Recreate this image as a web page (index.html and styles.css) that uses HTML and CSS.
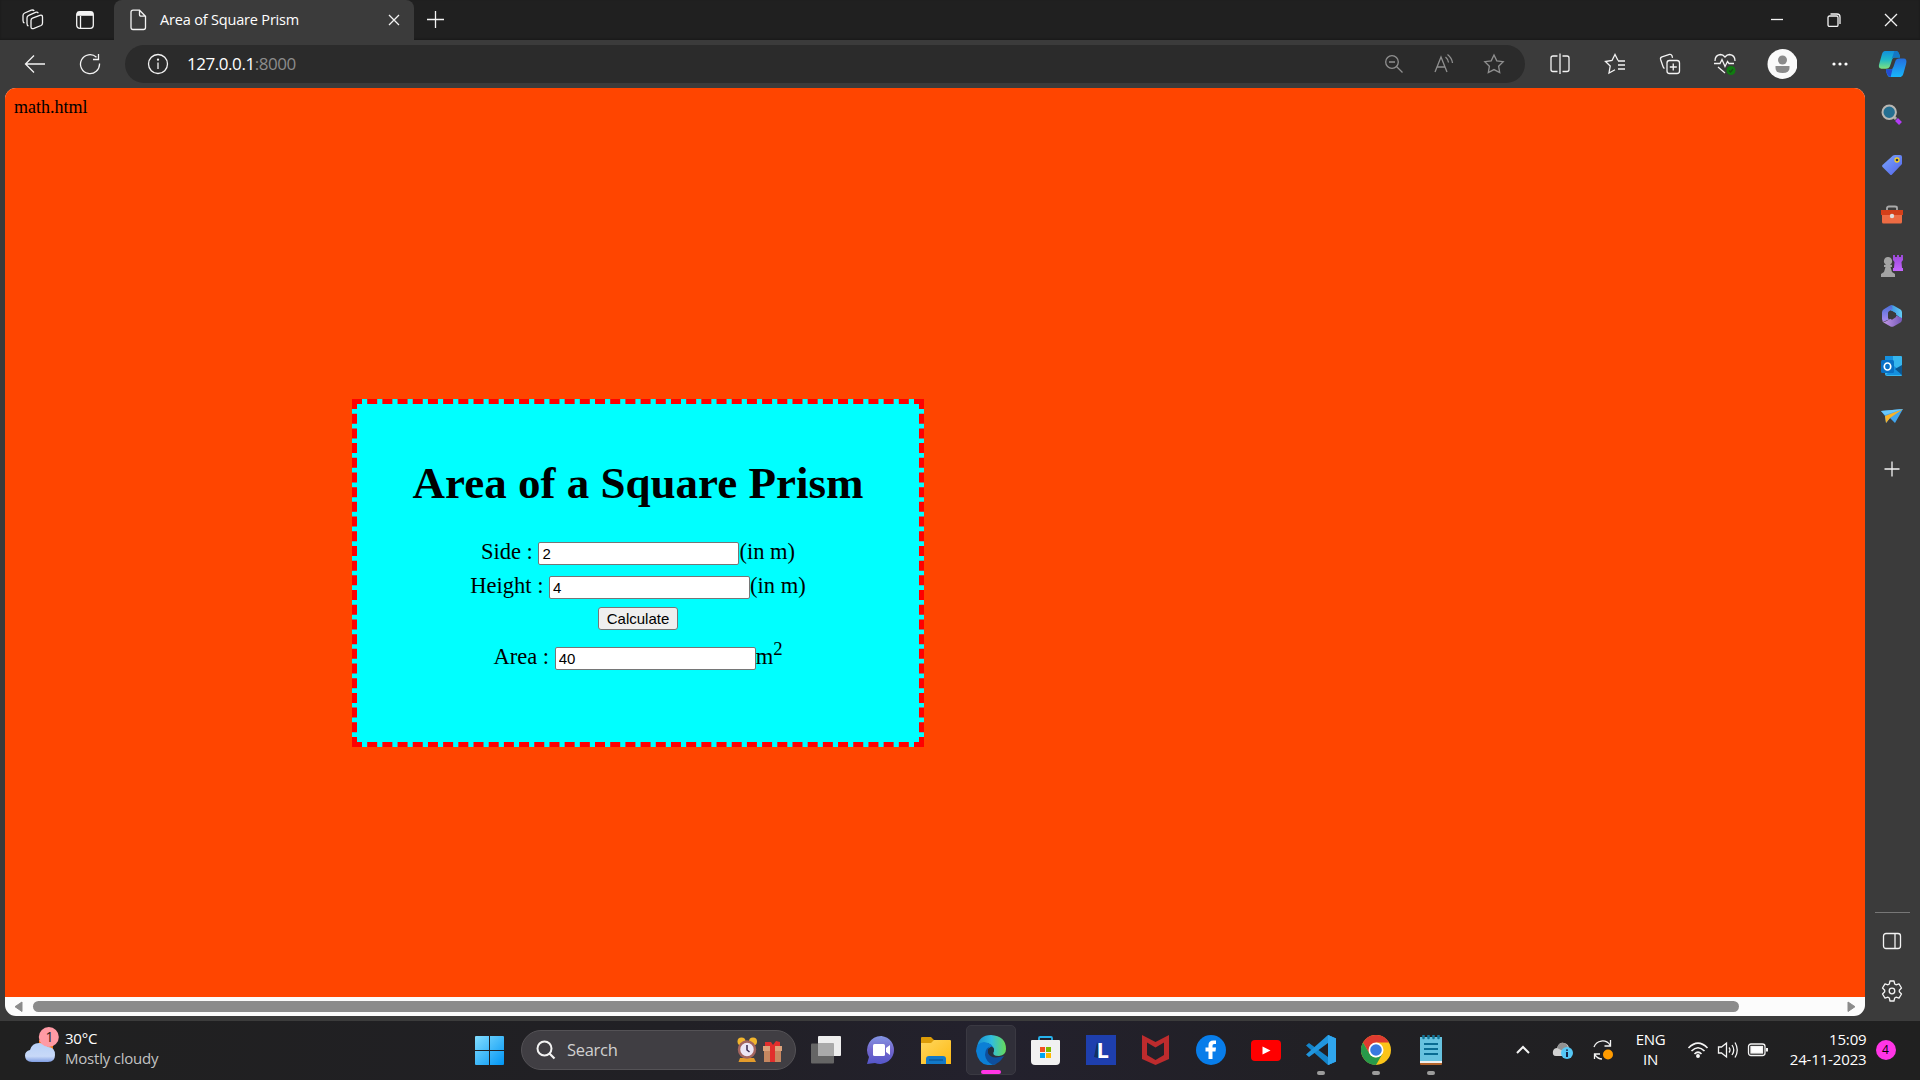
FILE: index.html
```html
<!DOCTYPE html>
<html lang="en">
<head>
<meta charset="utf-8">
<title>Area of Square Prism</title>
<link rel="stylesheet" href="styles.css">
</head>
<body>
<header class="tabbar">
  <div class="tabtools">
    <svg class="line" width="22" height="22" viewBox="0 0 22 22"><path d="M10.500 9.200L17.800 6.300Q20.500 5.500 20.500 8V14Q20.500 15.800 19 16.500L12 19.400Q9 20.500 9 17.800V11.500Q9 9.800 10.500 9.200Z M6.500 17Q5 16.500 5 14.500V8.800Q5 7 6.800 6.300L13.500 3.400Q15.500 2.700 16.300 4.300 M2.500 14Q1 13.500 1 11.500V6.500Q1 4.700 2.700 4L9.300 1.200Q11.300.5 12.200 1.900"/></svg>
    <svg class="line" width="20" height="20" viewBox="0 0 20 20"><rect x="1.700" y="1.700" width="16.600" height="16.600" rx="3"/><path d="M5.500 6V18"/><path d="M2 3.800H18" stroke-width="4"/></svg>
  </div>
  <div class="tab">
    <svg class="line" width="18" height="22" viewBox="0 0 18 22"><path d="M4 1.200H10.500L16.500 7.200V18.500Q16.500 20.500 14.500 20.500H4Q2 20.500 2 18.500V3.200Q2 1.200 4 1.200Z M10.500 1.500V5.500Q10.500 7.200 12 7.200H16.200"/></svg>
    <span class="tabtitle">Area of Square Prism</span>
    <svg class="line close" width="12" height="12" viewBox="0 0 12 12"><path d="M1 1L11 11M11 1L1 11"/></svg>
  </div>
  <svg class="line plus" width="18" height="18" viewBox="0 0 18 18"><path d="M8.500 0V17M0 8.500H17"/></svg>
  <div class="wincontrols">
    <svg class="line" width="14" height="14" viewBox="0 0 14 14"><path d="M1 6.500H13"/></svg>
    <svg class="line" width="14" height="14" viewBox="0 0 14 14"><rect x="1" y="3" width="10" height="10.500" rx="1.500"/><path d="M3.500 1H10Q13 1 13 4V11"/></svg>
    <svg class="line" width="14" height="14" viewBox="0 0 14 14"><path d="M1 1L13 13M13 1L1 13"/></svg>
  </div>
</header>
<nav class="toolbar">
  <div class="navbuttons">
    <svg class="line" width="22" height="20" viewBox="0 0 22 20"><path d="M21 10H1.500M10 1.500L1.500 10L10 18.500"/></svg>
    <svg class="line" width="22" height="22" viewBox="0 0 22 22"><path d="M20.500 10.500A9.500 9.500 0 1 1 17.500 4.200M19.500 1V6.500H14"/></svg>
  </div>
  <div class="address">
    <svg class="line" width="22" height="22" viewBox="0 0 22 22"><circle cx="11" cy="11" r="9.500"/><path d="M11 9.500V16"/><circle cx="11" cy="6.700" r=".5"/></svg>
    <span class="url">127.0.0.1<span class="port">:8000</span></span>
    <div class="addressicons">
      <svg class="line" width="20" height="20" viewBox="0 0 20 20"><circle cx="8" cy="8" r="6.300"/><path d="M5 8H11M12.500 12.500L18.500 18.500"/></svg>
      <svg class="line" width="22" height="22" viewBox="0 0 22 22"><path d="M2 19L8 4L14 19M4 14H12M12.500 4Q15 6 15.500 9.500M14.500 1.500Q19 5 19.500 10"/></svg>
      <svg class="line" width="22" height="22" viewBox="0 0 22 22"><path d="M11 2L13.800 7.800L20.200 8.700L15.600 13.200L16.700 19.600L11 16.600L5.300 19.600L6.400 13.200L1.800 8.700L8.200 7.800Z"/></svg>
    </div>
  </div>
  <div class="tools">
    <svg class="line" width="22" height="22" viewBox="0 0 22 22"><path d="M8.500 3H4Q2 3 2 5V16.500Q2 18.500 4 18.500H8.500M13.500 3H18Q20 3 20 5V16.500Q20 18.500 18 18.500H13.500M11 .5V21"/></svg>
    <svg class="line" width="22" height="22" viewBox="0 0 22 22"><path d="M14 7.500L11 1.500L8 7.500L1.500 8.500L6.200 13L5 20L11 16.800M14 8H21M14 12H21M14 16H21"/></svg>
    <svg class="line" width="22" height="22" viewBox="0 0 22 22"><rect x="8" y="7.500" width="12.500" height="13" rx="2.500"/><path d="M14.250 10.500V17.500M10.800 14H17.800M5.500 15.500Q4.500 15 4 13.500L1.600 6.500Q1 4.500 3 3.800L10.500 1.400Q12.300 1 13 2.700L13.500 4.800"/></svg>
    <svg class="line" width="24" height="24" viewBox="0 0 24 24"><path d="M2 9Q2 3 7.500 2.500Q10 2.500 12 5Q14 2.500 16.500 2.500Q22 3 22 9M1 11.500H7L9 7.500L12 14.500L14.500 9.500L16 11.500H21M5 15L12 21"/><circle cx="18" cy="18.500" r="4.500" fill="#107c10" stroke="none"/><path d="M16 18.500L17.500 20L20 17" stroke="#174b17"/></svg>
    <svg width="30" height="32" viewBox="0 0 30 32"><circle cx="15.500" cy="16" r="15" fill="#fafafa"/><circle cx="15.500" cy="12" r="4.500" fill="#8a8a8a"/><path d="M8.500 18H22.500V20Q22.500 25 15.500 25Q8.500 25 8.500 20Z" fill="#8a8a8a"/></svg>
    <svg width="18" height="6" viewBox="0 0 18 6"><g fill="#fff"><circle cx="3" cy="3" r="1.600"/><circle cx="9" cy="3" r="1.600"/><circle cx="15" cy="3" r="1.600"/></g></svg>
    <svg width="30" height="28" viewBox="0 0 31 30"><defs><linearGradient id="cpa" x2="0" y2="1"><stop stop-color="#118fdd"/><stop offset=".5" stop-color="#20b9c8"/><stop offset="1" stop-color="#7fe27c"/></linearGradient><linearGradient id="cpb" x2="0" y2="1"><stop stop-color="#246dde"/><stop offset="1" stop-color="#18b6fa"/></linearGradient></defs><path d="M7 1H19Q22 1 23 8H17Q15 8 14 12L12 18Q11 20 8 20H3Q-1 20 1 14L3.500 5Q4.500 1 7 1Z" fill="url(#cpa)"/><path d="M17 1H19Q22 1 23 8H17Q15 8 14 10Z" fill="#1477c4"/><path d="M22 9H27Q31 9 29.500 15L27 24Q26 29 22 29H12Q9 29 8 21H13Q15 21 16 18L18 12Q19 9 22 9Z" fill="url(#cpb)"/><path d="M8 21H13L15 20L13 29Q9 29 8 21Z" fill="#234bd2"/></svg>
  </div>
</nav>
<div class="workspace">
  <main class="page">
    <div class="document">
      <div class="templatename">math.html</div>
      <form class="card">
        <h1>Area of a Square Prism</h1>
        <div class="field">Side : <input type="text" value="2">(in m)</div>
        <div class="field">Height : <input type="text" value="4">(in m)</div>
        <div class="action"><button type="button">Calculate</button></div>
        <div class="field">Area : <input type="text" value="40">m<sup>2</sup></div>
      </form>
    </div>
    <div class="scrollbar">
      <svg width="9" height="11" viewBox="0 0 9 11"><path d="M8 1V10.500L1 5.700Z" fill="#8b8b8b" stroke="#8b8b8b" stroke-linejoin="round"/></svg>
      <div class="track"><div class="thumb"></div></div>
      <svg width="9" height="11" viewBox="0 0 9 11"><path d="M1 1V10.500L8 5.700Z" fill="#8b8b8b" stroke="#8b8b8b" stroke-linejoin="round"/></svg>
    </div>
  </main>
  <aside class="sidebar">
    <div class="apps">
      <svg width="22" height="22" viewBox="0 0 22 22"><path d="M15.500 15.500L19.500 19.500" stroke="#b23bf5" stroke-width="4"/><path d="M12 12L15 15" stroke="#aaa" stroke-width="3"/><circle cx="8.200" cy="8.200" r="6.700" fill="#256f91" stroke="#b9b7b3" stroke-width="2"/></svg>
      <svg width="22" height="22" viewBox="0 0 22 22"><defs><linearGradient id="tag" x2="1" y2="1"><stop stop-color="#7aa7ff"/><stop offset="1" stop-color="#5363e9"/></linearGradient></defs><path d="M12 1.500Q13 1 14 1H19Q21 1 21 3V10L11 20.500Q10 21.500 9 20.500L1.500 13Q.5 12 1.500 11Z" fill="url(#tag)"/><circle cx="16" cy="6" r="2" fill="#27355c" stroke="#f6cf23" stroke-width="1.300"/></svg>
      <svg width="24" height="20" viewBox="0 0 24 20"><path d="M7 5V3Q7 1.500 9 1.500H15Q17 1.500 17 3V5" fill="none" stroke="#aaa" stroke-width="1.800"/><rect x="2" y="8" width="20" height="10.500" rx="1.500" fill="#ed6b43"/><path d="M1 5H23V10H1Z" fill="#d33f19"/><circle cx="12" cy="11" r="2.200" fill="#ddd"/></svg>
      <svg width="24" height="24" viewBox="0 0 24 24"><defs><linearGradient id="rook" x2="0" y2="1"><stop stop-color="#9a48d8"/><stop offset="1" stop-color="#c566ff"/></linearGradient></defs><path d="M13 1H15V3H17V1H19V3H21V1H23V6L21.500 8L22 14H23V17H13V14H14L14.500 8L13 6Z" fill="url(#rook)"/><path d="M8 3A4 4 0 0 1 10 10.500L12 11V13H10.500L12 18L15 20V23H1V20L4 18L5.500 13H4V11L6 10.500A4 4 0 0 1 8 3Z" fill="#a3a3a3"/></svg>
      <svg width="22" height="22" viewBox="0 0 22 22"><defs><linearGradient id="oa"><stop stop-color="#3a8fe0"/><stop offset="1" stop-color="#62cdf5"/></linearGradient><linearGradient id="ob" x2="0" y2="1"><stop stop-color="#4a6fd8"/><stop offset="1" stop-color="#a98af0"/></linearGradient><linearGradient id="oc"><stop stop-color="#c79cea"/><stop offset="1" stop-color="#7458b8"/></linearGradient></defs><path d="M9.500 .5Q11 0 12.500 .6L19.500 4.600Q21 5.600 21 7.500V14L15 9.500V8.500L9 5Z" fill="url(#oa)"/><path d="M11 .3Q10 0 8.500 .8L2.500 4.500Q1 5.500 1 7.500V14Q1 16.500 3.500 16.300L8 14.500L7 13V8Q7 7 8 6.300L11.500 4Z" fill="url(#ob)"/><path d="M1.200 15.500Q3 17.500 5.500 16L15 10.500L21 13V14.500Q21 16.500 19.500 17.500L12.500 21.400Q11 22 9.500 21.400L3 17.700Q1.500 16.800 1.200 15.500Z" fill="url(#oc)"/><path d="M7.500 8L11 6L15 8.200V12L11 14.700L7.500 12.800Z" fill="#3b3b3b"/></svg>
      <svg width="22" height="22" viewBox="0 0 22 22"><path d="M6 1H20Q21 1 21 2V20Q21 21 20 21H6Q4 21 4 19V3Q4 1 6 1Z" fill="#36b6ee"/><path d="M4 1H12V6H4ZM13 11L21 17V20H5Z" fill="#1490df"/><path d="M14 14L21 10V20Z" fill="#0b568f"/><rect y="5" width="13" height="13" rx="1.500" fill="#0870c5"/><ellipse cx="6.500" cy="11.500" rx="3.200" ry="3.500" fill="none" stroke="#fff" stroke-width="1.700"/></svg>
      <svg width="24" height="18" viewBox="0 0 24 18"><path d="M1 4L23 2L15 16L10 11L6 16L5 9Z" fill="#42a5ed"/><path d="M5 9L23 2L10 11L6 16Z" fill="#f7b228"/><path d="M1 4L23 2L5 8Z" fill="#69c8fc"/></svg>
      <svg class="line" width="16" height="16" viewBox="0 0 16 16"><path d="M8 .5V15.500M.5 8H15.500"/></svg>
    </div>
    <div class="sidebarfoot">
      <svg class="line" width="20" height="18" viewBox="0 0 20 18"><rect x="1.500" y="1.500" width="17" height="15" rx="2.500"/><path d="M13 2V16"/></svg>
      <svg class="line" width="22" height="22" viewBox="0 0 22 22"><path d="M9 1H13L13.700 4L15 4.800L18 3.800L20.500 8L18.300 10.200V11.800L20.500 14L18 18.200L15 17.200L13.700 18L13 21H9L8.300 18L7 17.200L4 18.200L1.500 14L3.700 11.800V10.200L1.500 8L4 3.800L7 4.800L8.300 4Z" stroke-linejoin="round"/><circle cx="11" cy="11" r="2.800"/></svg>
    </div>
  </aside>
</div>
<footer class="taskbar">
  <div class="weather">
    <svg width="36" height="38" viewBox="0 0 36 38"><defs><linearGradient id="cloud" x2="0" y2="1"><stop stop-color="#b8d0f7"/><stop offset=".7" stop-color="#c8d9f8"/><stop offset="1" stop-color="#7f9de2"/></linearGradient></defs><path d="M14 14H28V24H14Z" fill="#ef7411"/><path d="M7 36Q0 36 0 29.500Q0 25 5 24Q7 17 14 17Q20 17 23 21Q30 21 30 29Q30 36 23 36Z" fill="url(#cloud)"/><circle cx="23.800" cy="11" r="10" fill="#ff9aa5"/><text x="24.500" y="16" text-anchor="middle" font-size="14" fill="#222">1</text></svg>
    <div class="weathertext"><span>30°C</span><span class="dim">Mostly cloudy</span></div>
  </div>
  <div class="launch">
    <div class="app start"><svg width="29" height="29" viewBox="0 0 29 29"><defs><linearGradient id="win" x2="1" y2="1"><stop stop-color="#82ddff"/><stop offset="1" stop-color="#0095f4"/></linearGradient></defs><path d="M0 1Q0 0 1 0H14V14H0ZM15 0H28Q29 0 29 1V14H15ZM0 15H14V29H1Q0 29 0 28ZM15 15H29V28Q29 29 28 29H15Z" fill="url(#win)"/></svg></div>
    <div class="search">
      <svg class="line" width="20" height="20" viewBox="0 0 20 20"><circle cx="8.500" cy="8.500" r="7" stroke-width="2"/><path d="M13.500 13.500L18.500 18.500" stroke-width="2.200"/></svg>
      <span>Search</span>
      <svg width="46" height="26" viewBox="0 0 46 26"><path d="M3 21L1.500 25H19L17 21Z" fill="#e39b2b"/><circle cx="4.500" cy="4.500" r="4" fill="#f2b52c"/><circle cx="16" cy="4.500" r="4" fill="#f2b52c"/><circle cx="10" cy="12.500" r="8" fill="#ece5f5" stroke="#a3645f" stroke-width="2.500"/><path d="M10 8V13L12.500 15" stroke="#39294e" fill="none" stroke-width="1.500"/><path d="M27 12H44V25H27Z" fill="#c68760"/><path d="M26 9H45V14H26Z" fill="#dca27b"/><path d="M33 8H38V25H33ZM28 5L34 5L36 8L39 4L43 5V9H28Z" fill="#e22e2c"/></svg>
    </div>
    <div class="app"><svg width="30" height="28" viewBox="0 0 30 28"><rect x="7" width="23" height="20" rx="1" fill="#eee"/><rect y="7.500" width="23" height="20" rx="1" fill="#656565"/><path d="M7 7.500H23V20H7Z" fill="#aaa"/></svg></div>
    <div class="app"><svg width="30" height="30" viewBox="0 0 30 30"><defs><linearGradient id="chat" x2="0" y2="1"><stop stop-color="#8396e4"/><stop offset=".5" stop-color="#7367cc"/><stop offset="1" stop-color="#5456ca"/></linearGradient></defs><path d="M15.500 1A14 14 0 1 1 9 28L1 29L3 22A14 14 0 0 1 15.500 1Z" fill="url(#chat)"/><rect x="7" y="9" width="12" height="12" rx="1.500" fill="#fff"/><path d="M20 13L24 10V20L20 17Z" fill="#fff"/></svg></div>
    <div class="app"><svg width="30" height="27" viewBox="0 0 30 27"><defs><linearGradient id="fold" x2="1" y2="1"><stop stop-color="#ffd75e"/><stop offset="1" stop-color="#fdb913"/></linearGradient></defs><path d="M0 1Q0 0 1 0H10L13 3H20V8H0Z" fill="#dc9c08"/><path d="M0 6H10L13 3H29Q30 3 30 4V27H0Z" fill="url(#fold)"/><path d="M5 27V22Q5 19 8 19H22Q25 19 25 22V27Z" fill="#1279c8"/><path d="M8 23H22" stroke="#064b87" stroke-width="1"/></svg></div>
    <div class="app active"><svg width="30" height="30" viewBox="0 0 30 30"><defs><linearGradient id="edge"><stop stop-color="#1690d4"/><stop offset=".5" stop-color="#31bddf"/><stop offset="1" stop-color="#67db57"/></linearGradient></defs><path d="M1 12Q3 0 15 0Q30 1 30 14Q30 20 23 21Q15 21 18 16Q16 7 8 8Z" fill="url(#edge)"/><path d="M0 16Q0 8 8 7Q17 8 18 15Q12 10 10 18Q11 27 20 29Q3 34 0 16Z" fill="#0b7fd6"/><path d="M16 11Q11 12 12 18Q15 25 28 21Q23 29 17 30Q10 27 9 20Q9 12 16 11Z" fill="#0e4f9d"/><path d="M15.500 11.500Q18.500 12.500 18 15.500Q15.500 19 18.500 21.500Q12 20.500 12 16Q12.500 12.500 15.500 11.500Z" fill="#24303f"/></svg></div>
    <div class="app"><svg width="29" height="29" viewBox="0 0 29 29"><path d="M8 6V2Q8 1 9 1H20Q21 1 21 2V6" fill="none" stroke="#26b3ed" stroke-width="1.800"/><path d="M0 5Q0 4 1 4H28Q29 4 29 5V25Q29 29 25 29H4Q0 29 0 25Z" fill="#f1f1f1"/><path d="M9 11H14V16H9Z" fill="#f25022"/><path d="M15 11H20V16H15Z" fill="#7fba00"/><path d="M9 17H14V22H9Z" fill="#00a4ef"/><path d="M15 17H20V22H15Z" fill="#ffb900"/></svg></div>
    <div class="app"><svg width="30" height="30" viewBox="0 0 30 30"><rect width="30" height="30" fill="#1e3fae"/><path d="M11 7L8 22L12 23H17Z" fill="#123262"/><text x="10.500" y="22.500" font-size="22" font-weight="700" fill="#fff">L</text></svg></div>
    <div class="app"><svg width="27" height="30" viewBox="0 0 27 30"><path d="M0 0L13.500 7L27 0V24L13.500 30L0 24ZM5 7.500V20L13.500 25L22 20V7.500L13.500 12.500Z" fill="#bd2b2d" fill-rule="evenodd"/></svg></div>
    <div class="app"><svg width="30" height="30" viewBox="0 0 30 30"><circle cx="15" cy="15" r="15" fill="#087dea"/><path d="M12.500 24V16.500H9.500V12.500H12.500V10Q12.500 5.500 17.500 5.500H20V9H18Q16.500 9 16.500 10.500V12.500H20L19.500 16.500H16.500V24Z" fill="#fff"/></svg></div>
    <div class="app"><svg width="30" height="21" viewBox="0 0 30 21"><rect width="30" height="21" rx="4" fill="#f00"/><path d="M11.500 6.500L19.500 10.500L11.500 14.500Z" fill="#fff"/></svg></div>
    <div class="app running"><svg width="30" height="30" viewBox="0 0 30 30"><path d="M22 0L30 3.500V26.500L22 30L0 10.500L3 8L22 22Z" fill="#1485cb"/><path d="M22 0L30 3.500V26.500L22 30V8L3 22L0 19.500Z" fill="#2196de"/><path d="M22 0L30 3.500V26.500L22 30Z" fill="#30a6ee"/></svg></div>
    <div class="app running"><svg width="30" height="30" viewBox="0 0 30 30"><circle cx="15" cy="15" r="15" fill="#fbc419"/><path d="M15 15L8.500 18.750L2 7.500A15 15 0 0 1 28 7.500H15Z" fill="#df3b30"/><path d="M2 7.500L8.500 18.750Q11 22.500 15 22.500L21.500 18.750L15 30A15 15 0 0 1 2 7.500Z" fill="#28994a"/><circle cx="15" cy="15" r="7.500" fill="#fff"/><circle cx="15" cy="15" r="5.800" fill="#3979e0"/></svg></div>
    <div class="app running"><svg width="22" height="30" viewBox="0 0 22 30"><rect y="25" width="22" height="5" rx="1" fill="#b3642b"/><rect y="23" width="22" height="5" fill="#eee"/><path d="M0 2H22V26H0Z" fill="#66c2df"/><path d="M4 9H18M4 14H18M4 19H18" stroke="#086b92" stroke-width="2"/><path d="M3.500 0V3M8.500 0V3M13.500 0V3M18.500 0V3" stroke="#147698" stroke-width="2.500" stroke-linecap="round"/></svg></div>
  </div>
  <div class="tray">
    <div class="trayicon"><svg class="line" width="16" height="10" viewBox="0 0 16 10"><path d="M2 8L8 2L14 8" stroke-width="2"/></svg></div>
    <div class="trayicon"><svg width="22" height="20" viewBox="0 0 22 20"><path d="M4 16Q0 16 1 11Q2 8 5 8Q7 2 12 3Q17 4 17 9V16Z" fill="#d1d1d1"/><path d="M5 8Q7 2 12 3Q16 4 16 9L11 11Z" fill="#929292"/><circle cx="15" cy="13" r="6" fill="#55c7f5"/><path d="M15 9.500V10.800M15 12V17" stroke="#113" stroke-width="1.800"/></svg></div>
    <div class="trayicon"><svg class="line" width="22" height="22" viewBox="0 0 22 22"><path d="M2 8A9 9 0 0 1 18 6M18.500 1V7H12.500M2.500 20V15H8M3 16Q6 20 10 20"/><circle cx="16" cy="15.500" r="5" fill="#ff9b00" stroke="none"/></svg></div>
    <div class="language"><span>ENG</span><span>IN</span></div>
    <div class="status">
      <svg class="line" width="22" height="18" viewBox="0 0 22 18"><path d="M1.500 7Q11-2.500 20.500 7M4.500 10Q11 3.500 17.500 10M7.500 13Q11 9.500 14.500 13" stroke-width="1.700"/><circle cx="11" cy="15" r="1.300" fill="#fff"/></svg>
      <svg class="line" width="22" height="20" viewBox="0 0 22 20"><path d="M1.500 7H4.500L9.500 3V17L4.500 13H1.500ZM12 7.500Q14 10 12 12.500M15 5Q18.500 10 15 15M18 2.500Q22.500 10 18 17.500"/></svg>
      <svg class="line" width="22" height="16" viewBox="0 0 22 16"><rect x="1.500" y="2" width="16.500" height="11.500" rx="2.500"/><rect x="4" y="4.500" width="11.500" height="6.500" fill="#fff"/><path d="M20 6V9.500" stroke-width="2"/></svg>
    </div>
    <div class="clock"><span>15:09</span><span>24-11-2023</span></div>
    <div class="badge">4</div>
  </div>
</footer>
</body>
</html>
```
FILE: styles.css
```css
* { box-sizing: border-box; }
body {
  margin: 0;
  width: 1920px;
  height: 1080px;
  overflow: hidden;
  display: flex;
  flex-direction: column;
  background: #3b3b3b;
  color: #fff;
  font-family: "Open Sans", "Noto Sans", sans-serif;
}
svg { display: block; flex: none; }
.line { fill: none; stroke: #f3f3f3; stroke-width: 1.3; }

.tabbar { flex: 0 0 40px; display: flex; background: #202020; box-shadow: inset 0 -1px 2px #191919; }
.tabtools { width: 114px; display: flex; align-items: center; gap: 31px; padding-left: 22px; }
.tab {
  width: 300px;
  display: flex;
  align-items: center;
  padding: 0 14px 0 15px;
  background: #3b3b3b;
  border-radius: 8px 8px 0 0;
}
.tabtitle { margin-left: 13px; padding-bottom: 2px; font-size: 14.5px; letter-spacing: -.18px; white-space: nowrap; }
.close { margin-left: auto; }
.plus { margin: 11px 0 0 13px; }
.wincontrols { margin-left: auto; width: 172px; display: flex; align-items: center; justify-content: space-around; }

.toolbar { flex: 0 0 48px; display: flex; align-items: center; }
.navbuttons { width: 125px; display: flex; gap: 33px; align-items: center; padding-left: 24px; }
.address {
  width: 1400px;
  height: 38px;
  display: flex;
  align-items: center;
  padding: 0 20px 0 22px;
  background: #2b2b2b;
  border-radius: 19px;
}
.url { margin-left: 18px; padding-bottom: 2px; font-size: 17px; letter-spacing: -.45px; }
.port { color: #8c8c8c; }
.addressicons { margin-left: auto; display: flex; align-items: center; gap: 28.5px; opacity: .5; }
.tools { margin-left: 7px; display: grid; grid-template-columns: 55px 55px 55px 55px 60px 56px 50px; place-items: center; }

.workspace { flex: 1; min-height: 0; display: flex; padding: 0 0 4px 5px; }
.page { width: 1860px; display: flex; flex-direction: column; border-radius: 11px; overflow: hidden; background: #fcfcfc; }
.document {
  flex: 1;
  padding: 9px;
  background: #ff4500;
  color: #000;
  font-family: "Liberation Serif", "Times New Roman", serif;
  font-size: 18px;
}
.templatename { height: 21px; line-height: 21px; }
.card {
  width: 572px;
  height: 348px;
  margin: 281px 0 0 338px;
  padding-top: 53px;
  background: #0ff;
  border: 5px dashed #f00;
  text-align: center;
  font-size: 22.5px;
}
.card h1 { margin: 0 0 26px; font-size: 45px; line-height: 52px; }
.field { height: 34px; line-height: 34px; white-space: nowrap; }
.field input {
  width: 201px;
  height: 22.5px;
  padding: 1px 3px;
  border: 1px solid #767676;
  border-radius: 2px;
  background: #fff;
  color: #000;
  font: 15px "Liberation Sans", Arial, sans-serif;
}
.field sup { font-size: 18.75px; line-height: 0; vertical-align: 9px; }
.action { height: 31px; margin-bottom: 6px; display: flex; align-items: center; justify-content: center; }
.action button {
  width: 80px;
  height: 22.5px;
  padding: 0;
  border: 1px solid #767676;
  border-radius: 3px;
  background: #efefef;
  color: #000;
  font: 15px "Liberation Sans", Arial, sans-serif;
}
.scrollbar { flex: 0 0 19px; display: flex; align-items: center; padding: 0 9px; }
.track { flex: 1; margin: 0 10px; }
.thumb { width: 1706px; height: 11px; border-radius: 6px; background: #8b8b8b; }

.sidebar { width: 55px; display: flex; flex-direction: column; justify-content: space-between; align-items: center; padding-right: 1px; }
.apps { display: grid; grid-template-rows: repeat(7, 50.2px) 56px; place-items: center; padding-top: 2px; }
.sidebarfoot { width: 35px; display: grid; grid-template-rows: 50px 50px; place-items: center; padding-top: 3px; border-top: 1px solid #777; }

.taskbar {
  flex: 0 0 60px;
  display: flex;
  justify-content: space-between;
  background: linear-gradient(90deg, #202020, #212025 35%, #23212d 52%, #212024 70%, #202020);
  border-top: 1px solid #3c3c3c;
  padding-bottom: 1px;
  font-size: 15px;
}
.weather { width: 461px; display: flex; gap: 4px; padding: 5px 0 0 25px; }
.weathertext { display: flex; flex-direction: column; line-height: 20px; padding-top: 2px; letter-spacing: -.22px; }
.dim { color: #c3c3c3; }
.launch { width: 998px; display: flex; align-items: center; }
.app { width: 50px; height: 50px; margin: 0 2.5px; display: flex; align-items: center; justify-content: center; position: relative; border-radius: 5px; }
.start { margin-left: 3px; }
.active { background: #302f39; border: 1px solid #3a3942; }
.active::after, .running::after {
  content: "";
  position: absolute;
  bottom: 0;
  width: 20px;
  height: 4px;
  border-radius: 2px;
  background: #ff35e6;
}
.running::after { width: 8px; background: #9c9c9c; }
.search {
  width: 275px;
  height: 40px;
  margin: 0 2px 0 4.5px;
  display: flex;
  align-items: center;
  padding: 0 12px 0 14px;
  background: #403e43;
  border: 1px solid #545256;
  border-radius: 20px;
}
.search span { margin-left: 11px; padding-bottom: 1px; flex: 1; color: #d0d0d0; font-size: 16.5px; letter-spacing: -.3px; }
.tray { width: 461px; display: flex; align-items: center; padding-left: 43.5px; }
.trayicon { width: 40px; display: flex; justify-content: center; }
.language { width: 56px; display: flex; flex-direction: column; align-items: center; line-height: 20px; padding-bottom: 2px; letter-spacing: -.3px; }
.status { width: 90px; display: flex; gap: 8px; padding-left: 8px; align-items: center; }
.clock { width: 98px; display: flex; flex-direction: column; align-items: flex-end; line-height: 20px; padding-bottom: 2px; letter-spacing: -.15px; }
.badge { width: 20px; height: 20px; margin-left: 9px; border-radius: 50%; background: #ff35e6; color: #000; font-size: 12px; line-height: 20px; text-align: center; }
```
